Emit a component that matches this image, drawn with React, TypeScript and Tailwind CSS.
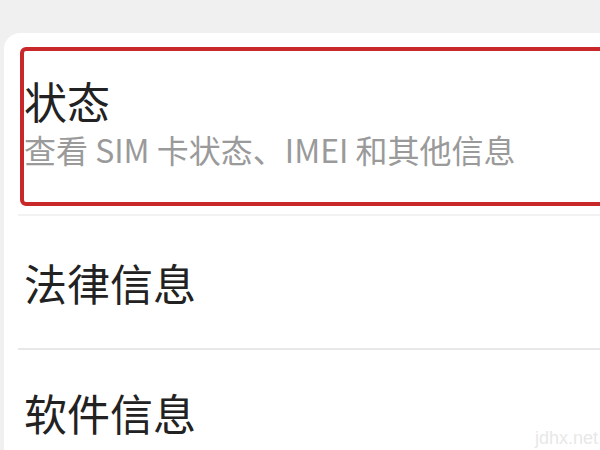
import React from "react";

const font = { fontFamily: '"Noto Sans CJK SC", "Noto Sans", sans-serif' };

export default function App() {
  return (
    <div
      className="w-[600px] h-[450px] overflow-hidden bg-[#f0f0f0] pt-[33px] pl-[4px] relative"
      style={font}
    >
      <div className="bg-white rounded-tl-[16px] h-full pt-[14px] pl-[16px]">
        <div className="border-[4px] border-[#c9282a] rounded-[6px] h-[159px] mr-[-12px] pl-0 pt-[25px]">
          <div className="text-[43px] leading-[48px] text-[#222222]">状态</div>
          <div className="text-[32px] leading-[38px] text-[#9a9a9a] mt-[6px]">
            查看 SIM 卡状态、IMEI 和其他信息
          </div>
        </div>
        <div className="h-[2px] bg-[#f2f2f2] mt-[8px] -ml-[2px]" />
        <div className="h-[134px] flex items-center pl-[4px] border-b-2 border-[#e8e8e8] -ml-[2px]">
          <div className="text-[43px] leading-[48px] text-[#222222] pl-[2px]">法律信息</div>
        </div>
        <div className="pt-[38px] pl-[4px]">
          <div className="text-[43px] leading-[48px] text-[#222222]">软件信息</div>
        </div>
      </div>
      <div
        className="absolute right-[2px] bottom-[2px] text-[18px] leading-[20px] text-[#e8e8e8]"
        style={{ fontFamily: '"Liberation Sans", Arial, sans-serif' }}
      >
        jdhx.net
      </div>
    </div>
  );
}
